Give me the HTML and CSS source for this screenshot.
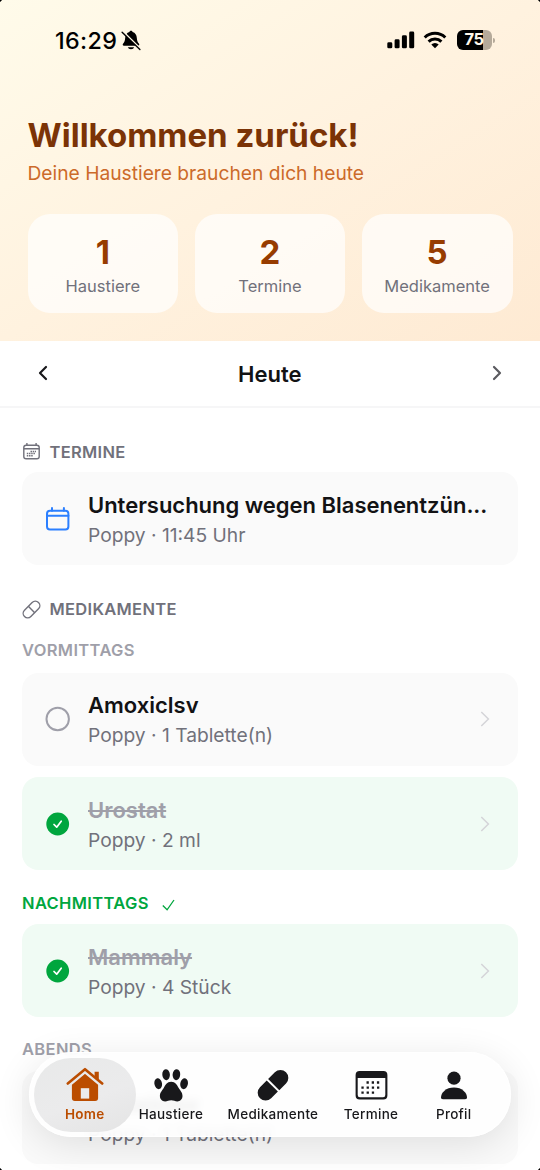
FILE: index.html
```html
<!DOCTYPE html>
<html lang="de">
<head>
<meta charset="utf-8">
<title>Willkommen zurück!</title>
<link rel="stylesheet" href="styles.css">
</head>
<body>
<div class="screen">
  <header class="hero">
    <div class="status">
      <div class="status-left">
        <span class="clock">16:29</span>
        <svg class="bell" width="20" height="21" viewBox="0 0 20 21">
          <path d="M10 .8c.8 0 1.400.5 1.600 1.200 2.700.8 4 3 4.200 5.800.2 3.200.8 4.400 2 5.600.9.900.6 2.300-.8 2.300H3c-1.400 0-1.700-1.400-.8-2.300 1.200-1.200 1.800-2.400 2-5.600.2-2.800 1.500-5 4.200-5.800C8.600 1.300 9.200.8 10 .8z"/>
          <path d="M6.800 17.200h6.400a3.300 2.800 0 0 1-6.400 0z"/>
          <path class="bell-gap" d="M1.800 1.500l17.200 17"/>
          <path class="bell-slash" d="M1.100 2.200l17.800 17.200"/>
        </svg>
      </div>
      <div class="status-right">
        <svg width="28" height="18" viewBox="0 0 28 18">
          <rect x="0.300" y="11.300" width="5" height="6" rx="1.400"/>
          <rect x="7.600" y="8.300" width="5" height="9" rx="1.400"/>
          <rect x="14.900" y="4.300" width="5" height="13" rx="1.400"/>
          <rect x="22.200" y="0.500" width="5" height="16.800" rx="1.400"/>
        </svg>
        <svg class="wifi" width="24" height="18" viewBox="0 0 24 18">
          <path class="wifi-arc" d="M1.700 6.500a14.800 14.800 0 0 1 20.600 0"/>
          <path class="wifi-arc" d="M5.600 10.600a9.200 9.200 0 0 1 12.800 0"/>
          <path d="M8.300 13.500a5.300 5.300 0 0 1 7.400 0L12 17.200z"/>
        </svg>
        <div class="battery"><div class="battery-body">75</div><div class="battery-tip"></div></div>
      </div>
    </div>
    <h1 class="title">Willkommen zurück!</h1>
    <p class="subtitle">Deine Haustiere brauchen dich heute</p>
    <div class="stats">
      <div class="stat"><span class="stat-num">1</span><span class="stat-label">Haustiere</span></div>
      <div class="stat"><span class="stat-num">2</span><span class="stat-label">Termine</span></div>
      <div class="stat"><span class="stat-num">5</span><span class="stat-label">Medikamente</span></div>
    </div>
  </header>

  <div class="daybar">
    <svg width="10" height="16" viewBox="0 0 10 16"><path class="day-prev" d="M8 2L2 8l6 6"/></svg>
    <h2 class="day">Heute</h2>
    <svg width="10" height="16" viewBox="0 0 10 16"><path class="day-next" d="M2 2l6 6-6 6"/></svg>
  </div>

  <main class="content">
    <div class="section">
      <svg class="section-icon" width="19" height="19" viewBox="0 0 19 19">
        <rect x="1.800" y="3.200" width="15.400" height="13.600" rx="2.300"/>
        <path d="M1.800 6.700h15.400M4.900 1v2.200M14.100 1v2.200"/>
        <path class="dots" d="M8.500 9.500h5.500M4.800 11.600h8.500M4.800 13.700h6.500"/>
      </svg>
      <span>TERMINE</span>
    </div>
    <div class="card">
      <svg class="lead calendar" width="26" height="26" viewBox="0 0 26 26">
        <rect x="2" y="4.800" width="21.400" height="18.800" rx="3"/>
        <path d="M2 9.700h21.400M7 2.100v2.700M18.900 2.100v2.700"/>
      </svg>
      <div class="info"><div class="name long">Untersuchung wegen Blasenentzün...</div><div class="meta">Poppy · 11:45 Uhr</div></div>
    </div>

    <div class="section medication">
      <svg class="section-icon" width="19" height="19" viewBox="0 0 19 19">
        <g transform="rotate(-45 9.500 9.500)"><rect x="-.4" y="5" width="19.800" height="9" rx="4.500"/><path d="M9.500 5v9"/></g>
      </svg>
      <span>MEDIKAMENTE</span>
    </div>
    <div class="period">VORMITTAGS</div>
    <div class="card">
      <svg class="lead ring" width="26" height="26" viewBox="0 0 26 26"><circle cx="12.700" cy="13" r="11.200"/></svg>
      <div class="info"><div class="name">Amoxiclsv</div><div class="meta">Poppy · 1 Tablette(n)</div></div>
      <svg class="chevron" width="10" height="16" viewBox="0 0 10 16"><path d="M1.300 1l7.100 7-7.100 7"/></svg>
    </div>
    <div class="card done">
      <svg class="lead tick" width="26" height="26" viewBox="0 0 26 26"><circle cx="12.700" cy="13" r="11.400"/><path d="M9 13.500l2.700 2.700 4.500-6"/></svg>
      <div class="info"><div class="name">Urostat</div><div class="meta">Poppy · 2 ml</div></div>
      <svg class="chevron" width="10" height="16" viewBox="0 0 10 16"><path d="M1.300 1l7.100 7-7.100 7"/></svg>
    </div>

    <div class="period complete">
      <span>NACHMITTAGS</span>
      <svg width="13" height="12" viewBox="0 0 13 12"><path d="M.8 6.500l4.300 4.300L12 1"/></svg>
    </div>
    <div class="card done">
      <svg class="lead tick" width="26" height="26" viewBox="0 0 26 26"><circle cx="12.700" cy="13" r="11.400"/><path d="M9 13.500l2.700 2.700 4.500-6"/></svg>
      <div class="info"><div class="name">Mammaly</div><div class="meta">Poppy · 4 Stück</div></div>
      <svg class="chevron" width="10" height="16" viewBox="0 0 10 16"><path d="M1.300 1l7.100 7-7.100 7"/></svg>
    </div>

    <div class="period evening">ABENDS</div>
    <div class="card">
      <div class="lead"></div>
      <div class="info"><div class="name">Amoxiclsv</div><div class="meta">Poppy · 1 Tablette(n)</div></div>
    </div>
  </main>

  <nav class="tabs">
    <div class="tab home">
      <svg width="38" height="36" viewBox="0 0 38 36">
        <path d="M5.900 17.100L19 6l13.100 11.100V31a3 3 0 0 1-3 3H8.900a3 3 0 0 1-3-3z"/>
        <path d="M28.600 4.800h4.200v9l-4.200-3.600z"/>
        <path class="roof-gap" d="M2.200 18.200L19 4.200l16.800 14"/>
        <path class="roof" d="M1.800 16.500L19 2.200l17.200 14.300"/>
        <rect class="door" x="14.800" y="21.200" width="8.400" height="10.400"/>
      </svg>
      <span>Home</span>
    </div>
    <div class="tab pets">
      <svg width="34" height="36" viewBox="0 0 34 36">
        <ellipse cx="12.100" cy="7.700" rx="3.800" ry="5.500" transform="rotate(-5 12.100 7.700)"/>
        <ellipse cx="22.400" cy="7.700" rx="3.800" ry="5.500" transform="rotate(5 22.400 7.700)"/>
        <ellipse cx="4.200" cy="16.700" rx="3.800" ry="5.500" transform="rotate(-10 4.200 16.700)"/>
        <ellipse cx="30.100" cy="16.700" rx="3.800" ry="5.500" transform="rotate(10 30.100 16.700)"/>
        <path d="M17.200 14.800c4.200 0 5.900 3.200 7.500 6.300 1.500 2.700 3.800 4.300 3.800 8 0 3.100-2.200 5.400-5.200 5.400-2.200 0-3.600-1.200-6.100-1.200s-3.900 1.200-6.100 1.200c-3 0-5.200-2.300-5.200-5.400 0-3.700 2.300-5.300 3.800-8 1.600-3.100 3.300-6.300 7.500-6.300z"/>
      </svg>
      <span>Haustiere</span>
    </div>
    <div class="tab meds">
      <svg width="34" height="36" viewBox="0 0 34 36">
        <g transform="translate(17 18.300) rotate(-45)">
          <path d="M-1 -7.900V7.900H-10.500a7.900 7.900 0 0 1 0-15.800zM1 -7.900V7.900H10.500a7.900 7.900 0 0 0 0-15.800z"/>
        </g>
      </svg>
      <span>Medikamente</span>
    </div>
    <div class="tab dates">
      <svg width="34" height="36" viewBox="0 0 34 36">
        <path fill-rule="evenodd" d="M5.600 4h23.800a4 4 0 0 1 4 4v20.500a4 4 0 0 1-4 4H5.600a4 4 0 0 1-4-4V8a4 4 0 0 1 4-4zM3.700 11.100V28a2.200 2.200 0 0 0 2.200 2.200h23.200a2.200 2.200 0 0 0 2.200-2.200V11.100z"/>
        <path class="grid-dots" d="M12.500 15.500h13M7.400 20.600h18M7.400 25.700h13"/>
      </svg>
      <span>Termine</span>
    </div>
    <div class="tab profile">
      <svg width="34" height="36" viewBox="0 0 34 36">
        <circle cx="17" cy="11.200" r="6.600"/>
        <path d="M6 32.300c-1.300 0-2-.6-2-1.700 0-4.900 5.100-10 13-10s13 5.100 13 10c0 1.100-.7 1.700-2 1.700z"/>
      </svg>
      <span>Profil</span>
    </div>
  </nav>
  <i class="corner tl"></i><i class="corner tr"></i><i class="corner bl"></i><i class="corner br"></i>
</div>
</body>
</html>
```
FILE: styles.css
```css
* { box-sizing: border-box; }
body {
  margin: 0;
  font-family: Inter, "Liberation Sans", sans-serif;
  color: #121214;
}
svg { display: block; flex: none; fill: none; }
.screen {
  position: relative;
  width: 540px;
  height: 1170px;
  overflow: hidden;
  background: #fff;
}

.hero {
  height: 340.500px;
  padding: 29px 27.500px 0;
  background: linear-gradient(to bottom right, #fffbea 0%, #fff2df 50%, #feead3 100%);
}
.status {
  display: flex;
  justify-content: space-between;
  height: 23px;
  padding: 0 18px 0 27.500px;
  align-items: center;
  color: #000;
}
.status-left, .status-right { display: flex; align-items: center; }
.status svg { fill: #000; }
.clock { font-size: 23.300px; font-weight: 500; letter-spacing: .35px; line-height: 22px; }
.bell { margin-left: 4px; }
.bell-gap { stroke: #fff8e6; stroke-width: 2; }
.bell-slash { stroke: #000; stroke-width: 1.400; stroke-linecap: round; }
.status-right { position: relative; top: -.5px; }
.wifi { margin: 0 0 0 8px; }
.status .wifi-arc { fill: none; stroke: #000; stroke-width: 3; }
.battery { display: flex; align-items: center; margin-left: 9.500px; }
.battery-body {
  width: 35px;
  height: 19.500px;
  border-radius: 6px;
  background: linear-gradient(90deg, #000 75%, #b5aa9a 75%);
  color: #fff8eb;
  font-size: 16.500px;
  font-weight: 700;
  line-height: 19px;
  letter-spacing: -.6px;
  text-align: center;
}
.battery-tip { width: 2px; height: 5px; margin-left: 1px; border-radius: 0 2px 2px 0; background: #b5aa9a; }

.title { margin: 63px 0 0; font-size: 33px; line-height: 40px; font-weight: 700; color: #7b3306; }
.subtitle { margin: 5px 0 0; font-size: 19.220px; line-height: 26px; color: #cc6a2a; }
.stats { display: grid; grid-template-columns: repeat(3, 1fr); gap: 16.500px; margin-top: 28px; }
.stat {
  height: 99px;
  padding-top: 18px;
  border-radius: 22px;
  background: rgba(255, 255, 255, .7);
  display: flex;
  flex-direction: column;
  align-items: center;
}
.stat-num { font-size: 33px; line-height: 40px; font-weight: 700; color: #973c00; }
.stat-label { margin-top: 3px; font-size: 16.500px; line-height: 22px; color: #71717b; }

.daybar {
  height: 67px;
  padding: 0 38px 0 37.500px;
  border-bottom: 2px solid #f6f6f7;
  display: flex;
  align-items: center;
  justify-content: space-between;
}
.day { margin: 1.500px 0 0; font-size: 22px; line-height: 28px; font-weight: 600; }
.day-prev, .day-next { stroke: #18181b; stroke-width: 2.200; stroke-linecap: round; stroke-linejoin: round; }
.day-next { stroke: #5b5b60; }

.content { padding: 33px 22px 0; }
.section { display: flex; align-items: center; gap: 8.500px; height: 22px; margin-bottom: 9.500px; color: #71717b; font-size: 16.500px; font-weight: 600; letter-spacing: .3px; }
.section.medication { margin: 33px 0 0; }
.section-icon { stroke: #71717b; stroke-width: 1.400; }
.dots { stroke-width: 1.500; stroke-dasharray: 1.500 .7; }
.period { height: 22px; margin: 20px 0 10.500px; line-height: 21px; font-size: 16.500px; font-weight: 600; letter-spacing: .35px; color: #9f9fa9; }
.period.complete { display: flex; align-items: center; gap: 13px; margin: 22px 0 10px; color: #00a63e; }
.period.complete path { stroke: #00a63e; stroke-width: 1.300; }
.period.complete svg { margin-top: 3px; }
.period.evening { margin: 22px 0 10px; }
.card {
  display: flex;
  align-items: center;
  height: 93px;
  padding: 0 28px 0 22.500px;
  border-radius: 16.500px;
  background: #fafafa;
}
.card + .card { margin-top: 11.500px; }
.card.done { background: #f0fbf4; }
.lead { width: 26px; flex: none; margin-right: 17.500px; }
.calendar { stroke: #2b7fff; stroke-width: 2; stroke-linecap: round; }
.ring { stroke: #9f9fa9; stroke-width: 2; }
.tick circle { fill: #00a63e; }
.tick path { stroke: #fff; stroke-width: 1.700; stroke-linecap: round; stroke-linejoin: round; }
.info { flex: 1; min-width: 0; padding-top: 1px; }
.name { font-size: 22px; line-height: 31px; font-weight: 600; white-space: nowrap; }
.name.long { letter-spacing: -.02px; }
.done .name { color: #9f9fa9; text-decoration: line-through; text-decoration-thickness: 2px; }
.meta { font-size: 19.200px; line-height: 28px; color: #71717b; white-space: nowrap; }
.chevron { stroke: #d4d4d8; stroke-width: 1.500; }

.tabs {
  position: absolute;
  left: 29px;
  top: 1052px;
  width: 482px;
  height: 85px;
  padding: 5.500px 6px 5.500px 5px;
  border-radius: 43px;
  display: flex;
  background: rgba(254, 254, 254, .92);
  backdrop-filter: blur(4px);
  box-shadow: 0 8px 38px rgba(0, 0, 0, .11), inset 0 0 0 1px rgba(255, 255, 255, .8);
}
.tab {
  display: flex;
  flex-direction: column;
  align-items: center;
  height: 74px;
  padding-top: 9px;
  font-size: 13.500px;
  line-height: 18px;
  font-weight: 500;
  letter-spacing: .28px;
  color: #18181b;
}
.tab svg { fill: #18181b; }
.tab span { margin-top: 2.500px; white-space: nowrap; }
.home { width: 102px; border-radius: 37px; background: linear-gradient(160deg, #e8e9e9, #ebebec 55%, #e4e4e4); color: #bb4d00; font-weight: 600; }
.tab.home svg { fill: #bb4d00; }
.roof-gap { fill: none; stroke: #e9e9ea; stroke-width: 4.200; }
.roof { fill: none; stroke: #bb4d00; stroke-width: 2.600; stroke-linecap: round; stroke-linejoin: round; }
.tab .door { fill: #ebebec; }
.pets { width: 71px; }
.meds { width: 134px; }
.dates { width: 63px; }
.profile { width: 103px; }
.grid-dots { stroke: #18181b; stroke-width: 2.300; stroke-dasharray: 2.300 2.900; }

.corner { position: absolute; width: 4px; height: 4px; }
.tl { left: 0; top: 0; background: radial-gradient(circle at 100% 100%, transparent 4px, #000 4.500px); }
.tr { right: 0; top: 0; background: radial-gradient(circle at 0 100%, transparent 4px, #000 4.500px); }
.bl { left: 0; bottom: 0; background: radial-gradient(circle at 100% 0, transparent 4px, #000 4.500px); }
.br { right: 0; bottom: 0; background: radial-gradient(circle at 0 0, transparent 4px, #000 4.500px); }
```
